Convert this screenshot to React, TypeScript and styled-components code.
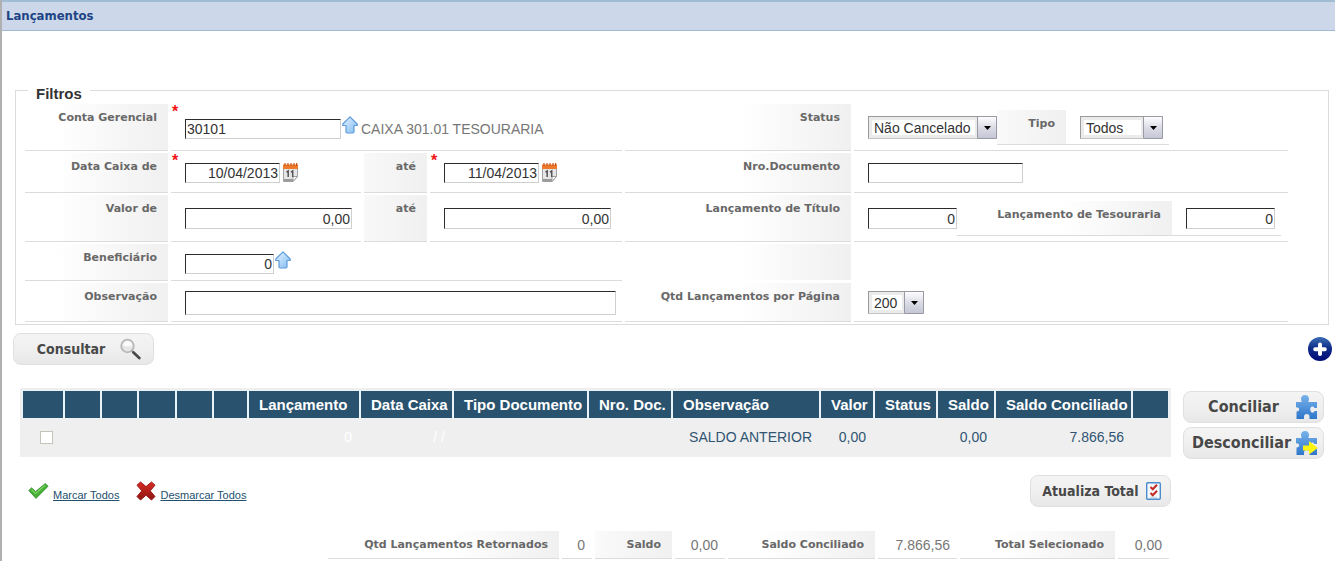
import React from 'react';
import styled, { createGlobalStyle, css } from 'styled-components';

const sans = '"Liberation Sans", Arial, sans-serif';
const wide = '"DejaVu Sans", Verdana, sans-serif';
const condensed = '"DejaVu Sans Condensed", Tahoma, sans-serif';
const rule = '#dcdcdc';
const navy = '#29526f';

const GlobalStyle = createGlobalStyle`
  *, *::before, *::after { box-sizing: border-box; }
  body { margin: 0; background: #fff; font-family: ${sans}; font-size: 14px; color: #333; }
  svg { display: block; flex: none; }
`;

const Page = styled.div`
  min-height: 100vh;
  border-left: 2px solid #b0b0b0;
`;

const TitleBar = styled.header`
  height: 31px;
  padding-left: 4px;
  display: flex;
  align-items: center;
  background: #ccd8e9;
  border-top: 2px solid #a1bdd4;
  border-bottom: 1px solid #9dbad7;
`;

const Title = styled.h1`
  margin: 0;
  font: bold 13px/16px ${condensed};
  color: #1d4485;
`;

const Main = styled.main`
  padding-top: 47px;
`;

const Filters = styled.fieldset`
  margin: 0 6px 0 13px;
  padding: 0 0 2px;
  border: 1px solid ${rule};
  min-width: 0;
`;

const Legend = styled.legend`
  margin-left: 12px;
  padding: 8px 8px 0;
  font-weight: bold;
  font-size: 15px;
  line-height: 16px;
`;

const FilterGrid = styled.div`
  margin: 2px 40px 0 9px;
  display: grid;
  grid-template-columns: 143px 190px 63px 192px 226px minmax(434px, 1fr);
  grid-template-rows: 47px 40px 47px 37px 39px;
  gap: 2px 3px;
`;

const shade = css`
  background: linear-gradient(to right, #fff, #f0f0f0) right / 112px 100% no-repeat;
`;

const labelText = css`
  font: bold 11px/14px ${wide};
  color: #686868;
  text-align: right;
  white-space: nowrap;
`;

const LabelCell = styled.label`
  ${labelText}
  ${shade}
  display: block;
  padding: 7px 11px 0 0;
  border-bottom: 1px solid ${rule};
`;

const BlankLabel = styled.div`
  ${shade}
  margin-bottom: 1px;
`;

const ValueCell = styled.div<{ $span?: number; $plain?: boolean }>`
  grid-column: span ${(p) => p.$span ?? 1};
  display: flex;
  align-items: center;
  padding-top: 1px;
  border-bottom: ${(p) => (p.$plain ? '0' : `1px solid ${rule}`)};
`;

const Mark = styled.span`
  flex: none;
  align-self: stretch;
  width: 14px;
  padding-left: 1px;
  font: bold 16px/14px ${sans};
  color: #f01414;
`;

const Lookup = styled.div`
  display: flex;
  align-items: flex-end;
  height: 23px;
  line-height: 20px;
  color: #777;
`;

const IconButton = styled.button`
  display: block;
  padding: 0;
  border: 0;
  background: none;
  cursor: pointer;
`;

const LookupButton = styled(IconButton)`
  align-self: flex-start;
  margin: 0 3px 0 1px;
`;

const CalendarButton = styled(IconButton)`
  margin-left: 2px;
`;

const Field = styled.input<{ $w: number; $h?: number; $right?: boolean }>`
  width: ${(p) => p.$w}px;
  height: ${(p) => p.$h ?? 20}px;
  padding: 0 1px;
  border: 1px solid;
  border-color: #2c2c2c #cfcfcf #cfcfcf #2c2c2c;
  border-radius: 0;
  background: #fff;
  color: #333;
  font: 14px/18px ${sans};
  text-align: ${(p) => (p.$right ? 'right' : 'left')};
  outline: 0;
`;

const SelectBox = styled.span<{ $w: number }>`
  position: relative;
  flex: none;
  width: ${(p) => p.$w}px;
  height: 23px;
`;

const Select = styled.select`
  appearance: none;
  display: block;
  width: 100%;
  height: 100%;
  padding: 0 20px 0 5px;
  border: 1px solid;
  border-color: #9a9a9a #c4c4c4 #c4c4c4 #9a9a9a;
  border-radius: 0;
  background: linear-gradient(#fff, #fff) 3px 3px / calc(100% - 24px) calc(100% - 6px) no-repeat #ebebeb;
  color: #333;
  font: 14px/20px ${sans};
`;

const SelectArrow = styled.span`
  position: absolute;
  top: 0;
  right: 0;
  bottom: 0;
  width: 20px;
  display: flex;
  align-items: center;
  justify-content: center;
  border: 1px solid #9a9aa4;
  border-radius: 1px;
  background: linear-gradient(#fdfdff, #dcdce6 50%, #c6c7d6);
  pointer-events: none;
`;

const Nested = styled.div`
  display: flex;
  align-items: center;
  height: 35px;
  padding-right: 6px;
  box-shadow: inset 0 -1px ${rule};
`;

const NestedLabel = styled.label<{ $w: number }>`
  ${labelText}
  ${shade}
  display: block;
  align-self: stretch;
  width: ${(p) => p.$w}px;
  margin: 0 14px 1px 0;
  padding: 7px 11px 0 0;
`;

const Toolbar = styled.div`
  display: flex;
  align-items: center;
  justify-content: space-between;
  margin-top: 8px;
  padding: 0 3px 0 11px;
`;

const ImageButton = styled.button<{ $start?: number; $end: number; $size?: number }>`
  display: flex;
  align-items: center;
  width: 141px;
  height: 32px;
  padding: 0 ${(p) => p.$end}px 0 ${(p) => p.$start ?? 4}px;
  border: 1px solid #e0e0e0;
  border-radius: 8px;
  background: linear-gradient(#f4f4f4, #efefef 55%, #e8e8e8);
  color: #484848;
  font: bold ${(p) => p.$size ?? 14}px/18px ${condensed};
  white-space: nowrap;
  cursor: pointer;

  span { flex: 1; text-align: center; }
`;

const Results = styled.div`
  display: flex;
  align-items: flex-start;
  gap: 12px;
  margin-top: 23px;
  padding: 0 11px 0 18px;
`;

const ResultsMain = styled.div`
  flex: 1;
  min-width: 0;
`;

const SideActions = styled.div`
  display: grid;
  gap: 4px;
  padding-top: 3px;
`;

const Table = styled.table`
  width: 100%;
  table-layout: fixed;
  border-collapse: separate;
  border-spacing: 2px;
  padding: 1px;
  background: #efefef;
`;

const HeadCell = styled.th`
  height: 27px;
  padding: 0 0 0 10px;
  background: ${navy};
  box-shadow: 0 0 0 1px #e9f2f6;
  color: #fff;
  font-size: 15px;
  line-height: 18px;
  text-align: left;
  white-space: nowrap;
`;

const Cell = styled.td<{ $faint?: boolean }>`
  height: 34px;
  padding: 0 7px 0 0;
  color: ${(p) => (p.$faint ? '#fff' : '#2f5573')};
  text-align: right;
  white-space: nowrap;
`;

const CheckCell = styled.td`
  padding: 0 0 0 17px;
`;

const Check = styled.input`
  appearance: none;
  display: block;
  width: 13px;
  height: 13px;
  margin: 0;
  border: 1px solid #c6c3ba;
  background: #fff;
`;

const Actions = styled.div`
  display: flex;
  align-items: center;
  justify-content: space-between;
  margin-top: 18px;
`;

const Marks = styled.div`
  display: flex;
  align-items: center;
  gap: 17px;
  padding-left: 8px;
`;

const MarkItem = styled.span`
  display: flex;
  align-items: center;
  gap: 4px;
`;

const MarkLink = styled.a`
  padding-top: 8px;
  color: #24506e;
  font-size: 11px;
  line-height: 14px;
`;

const Totals = styled.dl`
  display: flex;
  justify-content: flex-end;
  gap: 3px;
  margin: 24px 2px 0 0;
`;

const TotalLabel = styled.dt<{ $w: number }>`
  ${labelText}
  ${shade}
  width: ${(p) => p.$w}px;
  height: 28px;
  padding: 7px 11px 0 0;
  border-bottom: 1px solid ${rule};
`;

const TotalValue = styled.dd<{ $w: number }>`
  width: ${(p) => p.$w}px;
  height: 28px;
  margin: 0;
  padding: 6px 7px 0 0;
  border-bottom: 1px solid ${rule};
  color: #777;
  line-height: 16px;
  text-align: right;
`;

const ArrowUpIcon = () => (
  <svg width="16" height="18" viewBox="0 0 16 18">
    <defs>
      <linearGradient id="up" x1="0" y1="0" x2="1" y2="1">
        <stop offset="0" stopColor="#e6f4ff" />
        <stop offset="1" stopColor="#7fbaf1" />
      </linearGradient>
    </defs>
    <path d="M8 .8 15.200 8v1.500H12v6.300q0 1.200-1.200 1.200H5.200Q4 17 4 15.800V9.500H.8V8Z" fill="url(#up)" stroke="#5f9bdb" strokeWidth="1.200" strokeLinejoin="round" />
  </svg>
);

const CalendarIcon = () => (
  <svg width="17" height="20" viewBox="0 0 17 20">
    <path d="M1.500 3h14v10.500L11 18.500H1.500Z" fill="#e6e6e6" stroke="#a2a2a2" />
    <path d="M2 16h9l-.5 2.500H2Z" fill="#9b9b9b" />
    <path d="M15.500 13.500H11v5Z" fill="#fafafa" stroke="#8e8e8e" strokeWidth=".8" />
    <path d="M1 1.500h15V6H1Z" fill="#ee7a2c" />
    <path d="M3 0v3M6 0v3M9 0v3M12 0v3M14.600 0v3" stroke="#c9561a" strokeWidth="1.200" />
    <path d="M4.500 9.200 6.200 8v6M9 9.200 10.700 8v6" fill="none" stroke="#555" strokeWidth="1.500" />
  </svg>
);

const SearchIcon = () => (
  <svg width="21" height="22" viewBox="0 0 21 22">
    <circle cx="7.500" cy="8" r="6.300" fill="#e6e6e6" stroke="#b9b9b9" strokeWidth="1.800" />
    <path d="M3 7.500a4.500 4.500 0 0 1 9 0q-4.500 2-9 0Z" fill="#fbfbfb" />
    <path d="m12 13 2 2" stroke="#999" strokeWidth="2" />
    <path d="m13.500 14.500 5.800 5.500" stroke="#4a4a4a" strokeWidth="2.800" strokeLinecap="round" />
  </svg>
);

const PlusIcon = () => (
  <svg width="24" height="24" viewBox="0 0 24 24">
    <defs>
      <linearGradient id="plus" x1="0" y1="0" x2="0" y2="1">
        <stop offset="0" stopColor="#3a6cb4" />
        <stop offset=".5" stopColor="#0d2a86" />
        <stop offset="1" stopColor="#000c78" />
      </linearGradient>
    </defs>
    <circle cx="12" cy="12" r="12" fill="url(#plus)" />
    <path d="M12 7.500v9.500M7.200 12.200h9.600" stroke="#fff" strokeWidth="4" strokeLinecap="round" />
  </svg>
);

const PuzzleIcon = ({ arrow }: { arrow?: boolean }) => (
  <svg width="23" height="26" viewBox="0 0 23 26">
    <defs>
      <linearGradient id="puzzle" x1="0" y1="0" x2="0" y2="1">
        <stop offset="0" stopColor="#78b2ea" />
        <stop offset="1" stopColor="#2f76ca" />
      </linearGradient>
    </defs>
    <path
      d="M1 8h5.800Q6 6.500 6 4.500 6.400 1 10 1q3.800.2 4 3.800 0 1.800-.8 3.200H22v6h-2.500q-.8-2.200-2.800-1.400-1.600.9-1.500 2.900.3 3 2.300 3.200 1.500-.1 2.200-1.700H22v8H14.500v-2.200q0-2.800-2.800-2.800-2.700.2-2.700 2.800V25H1.500v-7.500q2.700-.1 2.700-2.300 0-2-3.200-2Z"
      fill="url(#puzzle)"
    />
    {arrow && <path d="M8 15.500h6v-4.500L22.800 18 14 24.500V20.500H8Z" fill="#fbf312" />}
  </svg>
);

const ChecklistIcon = () => (
  <svg width="15" height="18" viewBox="0 0 15 18">
    <rect x=".7" y=".7" width="13.600" height="16.600" rx="1" fill="#f4f8fd" stroke="#4a8ccc" strokeWidth="1.400" />
    <path d="m4.500 5 2.300 2.300L11 2.800M4.500 11l2.300 2.300L11 8.800" fill="none" stroke="#c22a22" strokeWidth="2" />
    <path d="M4 15.300h7" stroke="#bcd0e6" />
  </svg>
);

const CheckIcon = () => (
  <svg width="21" height="16" viewBox="0 0 21 16">
    <path d="M.8 7.500 3.600 4.800 7.600 8.500 17.200.6l2.900 2.600L8 15.400Z" fill="#45b035" stroke="#318a29" strokeWidth=".8" strokeLinejoin="round" />
    <path d="M3.500 6.600 7.700 10.500 17 2.300" fill="none" stroke="#7fd468" strokeWidth="1.200" />
  </svg>
);

const CrossIcon = () => (
  <svg width="20" height="20" viewBox="0 0 20 20">
    <defs>
      <linearGradient id="cross" x1="0" y1="0" x2="0" y2="1">
        <stop offset="0" stopColor="#da2b22" />
        <stop offset="1" stopColor="#8a1512" />
      </linearGradient>
    </defs>
    <path
      d="M4.500 1 10 5.600 15.500 1 19 4.200 14.200 9.800 19 15.500 15.500 19 10 14.200 4.500 19 1 15.500 5.800 9.800 1 4.200Z"
      fill="url(#cross)"
      stroke="#9d1c18"
      strokeWidth="1"
      strokeLinejoin="round"
    />
  </svg>
);

const Dropdown = ({ id, value, width }: { id: string; value: string; width: number }) => (
  <SelectBox $w={width}>
    <Select id={id} defaultValue={value}>
      <option>{value}</option>
    </Select>
    <SelectArrow>
      <svg width="7" height="4" viewBox="0 0 7 4">
        <path d="M0 0h7L3.500 4Z" fill="#000" />
      </svg>
    </SelectArrow>
  </SelectBox>
);

const columns: [string, number][] = [
  ['', 40], ['', 35], ['', 35], ['', 36], ['', 35], ['', 33],
  ['Lançamento', 110], ['Data Caixa', 91], ['Tipo Documento', 133], ['Nro. Doc.', 82],
  ['Observação', 146], ['Valor', 52], ['Status', 61], ['Saldo', 56],
  ['Saldo Conciliado', 135], ['', 35],
];

const totals: [string, number, string, number][] = [
  ['Qtd Lançamentos Retornados', 231, '0', 30],
  ['Saldo', 77, '0,00', 50],
  ['Saldo Conciliado', 147, '7.866,56', 79],
  ['Total Selecionado', 155, '0,00', 51],
];

export default function App() {
  return (
    <>
      <GlobalStyle />
      <Page>
        <TitleBar>
          <Title>Lançamentos</Title>
        </TitleBar>
        <Main>
          <Filters>
            <Legend>Filtros</Legend>
            <FilterGrid>
              <LabelCell htmlFor="conta">Conta Gerencial</LabelCell>
              <ValueCell $span={3}>
                <Mark>*</Mark>
                <Lookup>
                  <Field id="conta" $w={156} defaultValue="30101" />
                  <LookupButton type="button" aria-label="Conta Gerencial"><ArrowUpIcon /></LookupButton>
                  CAIXA 301.01 TESOURARIA
                </Lookup>
              </ValueCell>
              <LabelCell htmlFor="status">Status</LabelCell>
              <ValueCell>
                <Mark />
                <Dropdown id="status" value="Não Cancelado" width={129} />
                <Nested>
                  <NestedLabel htmlFor="tipo" $w={69}>Tipo</NestedLabel>
                  <Dropdown id="tipo" value="Todos" width={83} />
                </Nested>
              </ValueCell>

              <LabelCell htmlFor="data-de">Data Caixa de</LabelCell>
              <ValueCell>
                <Mark>*</Mark>
                <Field id="data-de" $w={95} $right defaultValue="10/04/2013" />
                <CalendarButton type="button" aria-label="Data Caixa de"><CalendarIcon /></CalendarButton>
              </ValueCell>
              <LabelCell htmlFor="data-ate">até</LabelCell>
              <ValueCell>
                <Mark>*</Mark>
                <Field id="data-ate" $w={95} $right defaultValue="11/04/2013" />
                <CalendarButton type="button" aria-label="até"><CalendarIcon /></CalendarButton>
              </ValueCell>
              <LabelCell htmlFor="documento">Nro.Documento</LabelCell>
              <ValueCell>
                <Mark />
                <Field id="documento" $w={155} />
              </ValueCell>

              <LabelCell htmlFor="valor-de">Valor de</LabelCell>
              <ValueCell>
                <Mark />
                <Field id="valor-de" $w={167} $h={21} $right defaultValue="0,00" />
              </ValueCell>
              <LabelCell htmlFor="valor-ate">até</LabelCell>
              <ValueCell>
                <Mark />
                <Field id="valor-ate" $w={167} $h={21} $right defaultValue="0,00" />
              </ValueCell>
              <LabelCell htmlFor="titulo">Lançamento de Título</LabelCell>
              <ValueCell>
                <Mark />
                <Field id="titulo" $w={89} $h={21} $right defaultValue="0" />
                <Nested>
                  <NestedLabel htmlFor="tesouraria" $w={215}>Lançamento de Tesouraria</NestedLabel>
                  <Field id="tesouraria" $w={89} $h={21} $right defaultValue="0" />
                </Nested>
              </ValueCell>

              <LabelCell htmlFor="beneficiario">Beneficiário</LabelCell>
              <ValueCell $span={3}>
                <Mark />
                <Lookup>
                  <Field id="beneficiario" $w={89} $right defaultValue="0" />
                  <LookupButton type="button" aria-label="Beneficiário"><ArrowUpIcon /></LookupButton>
                </Lookup>
              </ValueCell>
              <BlankLabel />
              <ValueCell $plain />

              <LabelCell htmlFor="observacao">Observação</LabelCell>
              <ValueCell $span={3}>
                <Mark />
                <Field id="observacao" $w={431} $h={24} />
              </ValueCell>
              <LabelCell htmlFor="quantidade">Qtd Lançamentos por Página</LabelCell>
              <ValueCell>
                <Mark />
                <Dropdown id="quantidade" value="200" width={56} />
              </ValueCell>
            </FilterGrid>
          </Filters>

          <Toolbar>
            <ImageButton type="button" $start={8} $end={12}>
              <span>Consultar</span>
              <SearchIcon />
            </ImageButton>
            <IconButton type="button" aria-label="Adicionar"><PlusIcon /></IconButton>
          </Toolbar>

          <Results>
            <ResultsMain>
              <Table>
                <colgroup>
                  {columns.map(([, width], i) => <col key={i} width={width} />)}
                </colgroup>
                <thead>
                  <tr>
                    {columns.map(([name], i) => <HeadCell key={i} scope="col">{name}</HeadCell>)}
                  </tr>
                </thead>
                <tbody>
                  <tr>
                    <CheckCell><Check type="checkbox" aria-label="SALDO ANTERIOR" /></CheckCell>
                    <Cell /><Cell /><Cell /><Cell /><Cell />
                    <Cell $faint>0</Cell>
                    <Cell $faint>/ /</Cell>
                    <Cell /><Cell />
                    <Cell>SALDO ANTERIOR</Cell>
                    <Cell>0,00</Cell>
                    <Cell />
                    <Cell>0,00</Cell>
                    <Cell>7.866,56</Cell>
                    <Cell />
                  </tr>
                </tbody>
              </Table>
              <Actions>
                <Marks>
                  <MarkItem><CheckIcon /><MarkLink href="#marcar">Marcar Todos</MarkLink></MarkItem>
                  <MarkItem><CrossIcon /><MarkLink href="#desmarcar">Desmarcar Todos</MarkLink></MarkItem>
                </Marks>
                <ImageButton type="button" $end={9}>
                  <span>Atualiza Total</span>
                  <ChecklistIcon />
                </ImageButton>
              </Actions>
              <Totals>
                {totals.map(([label, labelWidth, value, valueWidth]) => (
                  <React.Fragment key={label}>
                    <TotalLabel $w={labelWidth}>{label}</TotalLabel>
                    <TotalValue $w={valueWidth}>{value}</TotalValue>
                  </React.Fragment>
                ))}
              </Totals>
            </ResultsMain>
            <SideActions>
              <ImageButton type="button" $start={8} $end={5} $size={16}>
                <span>Conciliar</span>
                <PuzzleIcon />
              </ImageButton>
              <ImageButton type="button" $start={4} $end={5} $size={16}>
                <span>Desconciliar</span>
                <PuzzleIcon arrow />
              </ImageButton>
            </SideActions>
          </Results>
        </Main>
      </Page>
    </>
  );
}
